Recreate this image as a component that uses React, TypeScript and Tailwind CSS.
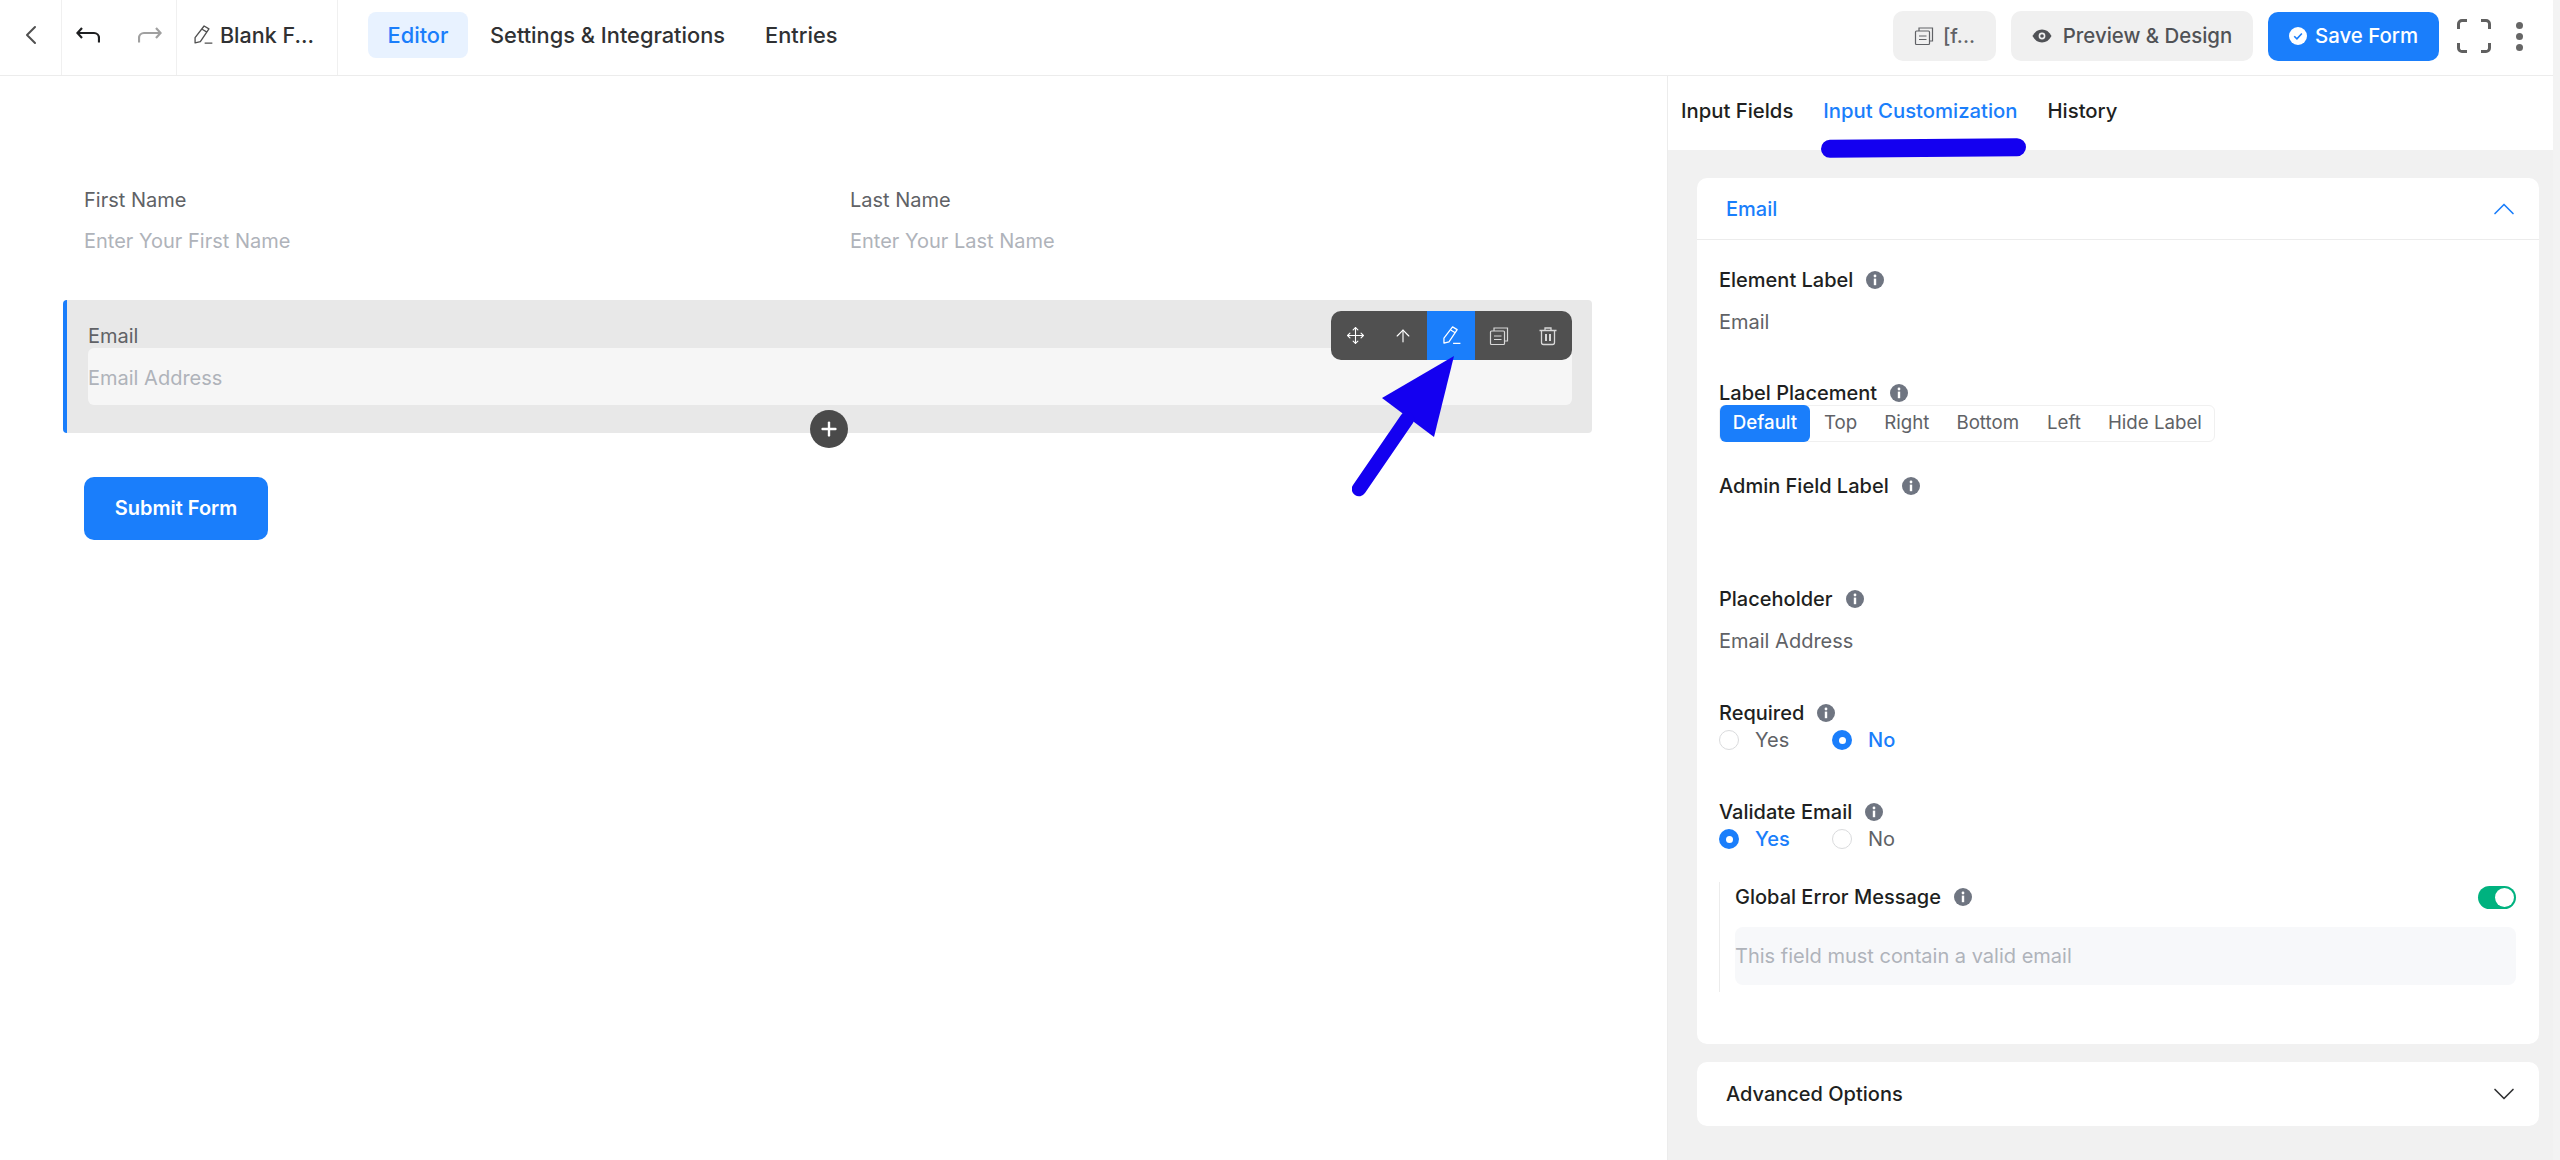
import { ArrowUp, ChevronDown, ChevronLeft, ChevronUp, Move, Plus } from 'lucide-react'
import { ReactNode } from 'react'

const PencilLine = ({ className }: { className: string }) => (
  <svg viewBox="0 0 20 20" fill="none" stroke="currentColor" strokeWidth="1.2" className={className}>
    <path d="M11 1.8 15.4 4.4 7.6 16 2.8 17.2 2.8 12.4z" strokeLinejoin="round" />
    <path d="M9.2 4.8 13.6 7.4M11.5 17.4h7" />
  </svg>
)

const CopyDoc = ({ className }: { className: string }) => (
  <svg viewBox="0 0 20 20" fill="none" stroke="currentColor" strokeWidth="1.2" className={className}>
    <rect x="1.5" y="5" width="14" height="13.5" rx="1" />
    <path d="M5 5V2h13.5v13h-3M5 10h7.5M5 13.5h7.5" />
  </svg>
)

const Trash = ({ className }: { className: string }) => (
  <svg viewBox="0 0 20 20" fill="none" stroke="currentColor" strokeWidth="1.3" className={className}>
    <path d="M1.5 4.5h17M7 4.5V2h6v2.5M3.5 4.5v12a2 2 0 0 0 2 2h9a2 2 0 0 0 2-2v-12" />
    <path d="M8 8v7M12 8v7" strokeWidth="2" />
  </svg>
)

const Undo = ({ className }: { className: string }) => (
  <svg viewBox="0 0 24 17" fill="none" stroke="currentColor" strokeWidth="2.2" className={className}>
    <path d="M6 2 1.4 7 6 12M1.4 7H18a5 5 0 0 1 5 5v4.5" />
  </svg>
)

const Info = () => (
  <svg viewBox="0 0 18 18" className="h-[18px] w-[18px] shrink-0">
    <circle cx="9" cy="9" r="9" fill="#6f7581" />
    <circle cx="9" cy="5" r="1.4" fill="#fff" />
    <rect x="7.8" y="7.6" width="2.4" height="6.6" fill="#fff" />
  </svg>
)

const FieldLabel = ({ children, className = '' }: { children: ReactNode; className?: string }) => (
  <div className={`flex items-center gap-[13px] text-[20px] font-medium text-[#1e1f21] ${className}`}>
    {children}
    <Info />
  </div>
)

const Radio = ({ label, checked }: { label: string; checked?: boolean }) => (
  <div className="flex w-[113px] items-center gap-[16px]">
    {checked ? (
      <span className="flex h-[20px] w-[20px] items-center justify-center rounded-full bg-[#1a7efb]">
        <span className="h-[7px] w-[7px] rounded-full bg-white" />
      </span>
    ) : (
      <span className="h-[20px] w-[20px] rounded-full border border-[#dadbdd] bg-white" />
    )}
    <span className={`text-[20px] ${checked ? 'font-medium text-[#1a7efb]' : 'text-[#606266]'}`}>{label}</span>
  </div>
)

export default function App() {
  return (
    <div className="flex h-[1160px] w-[2560px] overflow-hidden bg-white font-['Inter',sans-serif]">
      <div className="flex w-[2553px] shrink-0 flex-col">
        <header className="flex h-[76px] shrink-0 items-stretch border-b border-[#ececec]">
          <div className="flex w-[62px] items-center justify-center border-r border-[#f0f0f0] pb-[5px]">
            <ChevronLeft className="h-[32px] w-[32px] text-[#505050]" strokeWidth={1.5} />
          </div>
          <div className="flex w-[115px] items-center gap-[38px] border-r border-[#f0f0f0] pb-[7px] pl-[14px]">
            <Undo className="h-[17px] w-[24px] text-[#1e1f21]" />
            <Undo className="h-[17px] w-[24px] -scale-x-100 text-[#a0a0a0]" />
          </div>
          <div className="flex w-[161px] items-center gap-[6px] border-r border-[#f0f0f0] pb-[5px] pl-[15px] text-[21.5px] font-medium text-[#303133]">
            <PencilLine className="h-[22px] w-[22px] text-[#505050]" />
            <span>Blank F...</span>
          </div>
          <nav className="ml-[30px] flex items-center pb-[5px] text-[21.8px] font-medium text-[#303133]">
            <span className="flex h-[46px] w-[100px] items-center justify-center rounded-[8px] bg-[#e8f2ff] text-[#1a7efb]">Editor</span>
            <span className="ml-[22px]">Settings &amp; Integrations</span>
            <span className="ml-[40px]">Entries</span>
          </nav>
          <div className="ml-auto flex items-center pb-[3px] pr-[30px]">
            <button className="flex h-[50px] w-[103px] items-center justify-center gap-[9px] rounded-[10px] bg-[#f0f0f0] text-[20px] font-medium text-[#606266]">
              <CopyDoc className="h-[20px] w-[20px]" />
              [f...
            </button>
            <button className="ml-[15px] flex h-[50px] w-[242px] items-center justify-center gap-[11px] rounded-[10px] bg-[#f0f0f0] text-[20.4px] font-medium text-[#505256]">
              <svg viewBox="0 0 20 14" className="h-[14px] w-[20px]">
                <path d="M.5 7C2.8 2.6 6 .5 10 .5s7.2 2.1 9.5 6.5c-2.3 4.4-5.5 6.5-9.5 6.5S2.8 11.4.5 7z" fill="#505256" />
                <circle cx="10" cy="7" r="3.4" fill="#f0f0f0" />
                <circle cx="10" cy="7" r="1.8" fill="#505256" />
              </svg>
              Preview &amp; Design
            </button>
            <button className="ml-[15px] flex h-[49px] w-[171px] items-center justify-center gap-[8px] rounded-[10px] bg-[#1a7efb] text-[20.4px] font-medium text-white">
              <svg viewBox="0 0 20 20" className="h-[18px] w-[18px]">
                <circle cx="10" cy="10" r="10" fill="#fff" />
                <path d="M5.8 10.3 8.8 13.2 14.3 7.2" fill="none" stroke="#1a7efb" strokeWidth="1.8" />
              </svg>
              Save Form
            </button>
            <svg viewBox="0 0 34 34" fill="none" stroke="#606060" strokeWidth="3" className="ml-[18px] h-[34px] w-[34px]">
              <path d="M1.5 10V5A3.5 3.5 0 0 1 5 1.5h5M24 1.5h5A3.5 3.5 0 0 1 32.5 5v5M32.5 24v5a3.5 3.5 0 0 1-3.5 3.5h-5M10 32.5H5A3.5 3.5 0 0 1 1.5 29v-5" />
            </svg>
            <div className="ml-[25px] flex flex-col gap-[4px]">
              <span className="h-[7px] w-[7px] rounded-full bg-[#666666]" />
              <span className="h-[7px] w-[7px] rounded-full bg-[#666666]" />
              <span className="h-[7px] w-[7px] rounded-full bg-[#666666]" />
            </div>
          </div>
        </header>

        <main className="flex min-h-0 flex-1">
          <section className="w-[1667px] shrink-0 pl-[84px] pt-[110px]">
            <div className="grid w-[1532px] grid-cols-2 text-[20px] leading-[28px]">
              <div>
                <div className="text-[#606266]">First Name</div>
                <div className="mt-[13px] text-[#afb3ba]">Enter Your First Name</div>
              </div>
              <div>
                <div className="text-[#606266]">Last Name</div>
                <div className="mt-[13px] text-[#afb3ba]">Enter Your Last Name</div>
              </div>
            </div>

            <div className="relative ml-[-21px] mt-[45px] h-[133px] w-[1529px] rounded-[4px] border-l-[4px] border-[#1a7efb] bg-[#e8e8e8] pl-[21px] pr-[20px] pt-[25px]">
              <div className="text-[20px] leading-[23px] text-[#606266]">Email</div>
              <div className="flex h-[57px] items-center rounded-[6px] bg-[#f6f6f6] pt-[3px] text-[20px] text-[#afb3ba]">Email Address</div>
              <div className="absolute right-[20px] top-[11px] flex h-[49px] w-[241px] overflow-hidden rounded-[10px] bg-[#505050] text-white">
                <span className="flex w-[48px] items-center justify-center">
                  <Move className="h-[19px] w-[19px]" strokeWidth={1.4} />
                </span>
                <span className="flex w-[48px] items-center justify-center">
                  <ArrowUp className="h-[20px] w-[20px]" strokeWidth={1.4} />
                </span>
                <span className="flex w-[48px] items-center justify-center bg-[#1a7efb]">
                  <PencilLine className="h-[21px] w-[21px]" />
                </span>
                <span className="flex w-[48px] items-center justify-center text-[#d8d8d8]">
                  <CopyDoc className="h-[20px] w-[20px]" />
                </span>
                <span className="flex w-[49px] items-center justify-center text-[#d8d8d8]">
                  <Trash className="h-[20px] w-[20px]" />
                </span>
              </div>
              <span className="absolute left-[743px] top-[110px] flex h-[38px] w-[38px] items-center justify-center rounded-full bg-[#4a4a4a] text-white">
                <Plus className="h-[22px] w-[22px]" strokeWidth={2.6} />
              </span>
              <svg viewBox="0 0 120 150" className="absolute left-[1285px] top-[52px] h-[150px] w-[120px]">
                <path d="M102 4 30 46 82 85z" fill="#1400f0" />
                <path d="M55 67 7 137" fill="none" stroke="#1400f0" strokeWidth="14.5" strokeLinecap="round" />
              </svg>
            </div>

            <button className="mt-[44px] h-[63px] w-[184px] rounded-[10px] bg-[#1a7efb] pb-[2px] text-[20px] font-semibold text-white">Submit Form</button>
          </section>

          <aside className="flex w-[886px] flex-col border-l border-[#ececec]">
            <div className="relative flex h-[74px] shrink-0 items-center gap-[30px] bg-white pb-[3px] pl-[13px] text-[20.3px] font-medium text-[#1e1f21]">
              <span>Input Fields</span>
              <span className="text-[#1a7efb]">Input Customization</span>
              <span>History</span>
              <span className="absolute left-[153px] top-[63px] h-[18px] w-[205px] -rotate-[0.5deg] rounded-full bg-[#1400f0]" />
            </div>
            <div className="flex-1 bg-[#f1f1f1] pl-[29px] pt-[28px]">
              <div className="w-[842px] rounded-[10px] bg-white pb-[52px]">
                <div className="flex h-[62px] items-center justify-between border-b border-[#ececec] pl-[29px] pr-[17px] text-[20px] font-medium text-[#1a7efb]">
                  Email
                  <ChevronUp className="h-[36px] w-[36px]" strokeWidth={1.1} />
                </div>
                <div className="pl-[22px] pr-[23px] pt-[26px]">
                  <FieldLabel className="h-[28px]">Element Label</FieldLabel>
                  <div className="mt-[14px] text-[20px] leading-[28px] text-[#606266]">Email</div>

                  <FieldLabel className="mt-[45px] h-[24px]">Label Placement</FieldLabel>
                  <div className="flex h-[37px] w-[496px] items-center rounded-[6px] border border-[#f0f0f0] text-[18.7px] text-[#606266]">
                    <span className="flex h-[37px] w-[90px] items-center justify-center rounded-[6px] bg-[#1a7efb] font-medium text-white">Default</span>
                    <span className="ml-[14px]">Top</span>
                    <span className="ml-[27px]">Right</span>
                    <span className="ml-[27px]">Bottom</span>
                    <span className="ml-[28px]">Left</span>
                    <span className="ml-[27px]">Hide Label</span>
                  </div>

                  <FieldLabel className="mt-[30px] h-[28px]">Admin Field Label</FieldLabel>
                  <FieldLabel className="mt-[85px] h-[28px]">Placeholder</FieldLabel>
                  <div className="mt-[14px] text-[20px] leading-[28px] text-[#606266]">Email Address</div>

                  <FieldLabel className="mt-[45px] h-[26px]">Required</FieldLabel>
                  <div className="flex h-[28px]">
                    <Radio label="Yes" />
                    <Radio label="No" checked />
                  </div>

                  <FieldLabel className="mt-[45px] h-[26px]">Validate Email</FieldLabel>
                  <div className="flex h-[28px]">
                    <Radio label="Yes" checked />
                    <Radio label="No" />
                  </div>

                  <div className="mt-[29px] border-l border-[#ececec] pb-[7px] pl-[15px]">
                    <div className="flex h-[30px] items-center justify-between">
                      <FieldLabel>Global Error Message</FieldLabel>
                      <span className="flex h-[23px] w-[38px] items-center justify-end rounded-full bg-[#00b27f] pr-[2px]">
                        <span className="h-[19px] w-[19px] rounded-full bg-white" />
                      </span>
                    </div>
                    <div className="mt-[15px] flex h-[58px] items-center rounded-[8px] bg-[#f7f8fa] text-[20px] text-[#afb3ba]">This field must contain a valid email</div>
                  </div>
                </div>
              </div>
              <div className="mt-[18px] flex h-[64px] w-[842px] items-center justify-between rounded-[10px] bg-white pl-[29px] pr-[17px] text-[20px] font-medium text-[#1e1f21]">
                Advanced Options
                <ChevronDown className="h-[36px] w-[36px] text-[#303133]" strokeWidth={1.1} />
              </div>
            </div>
          </aside>
        </main>
      </div>
      <div className="flex-1 bg-[#f3f3f3]" />
    </div>
  )
}
